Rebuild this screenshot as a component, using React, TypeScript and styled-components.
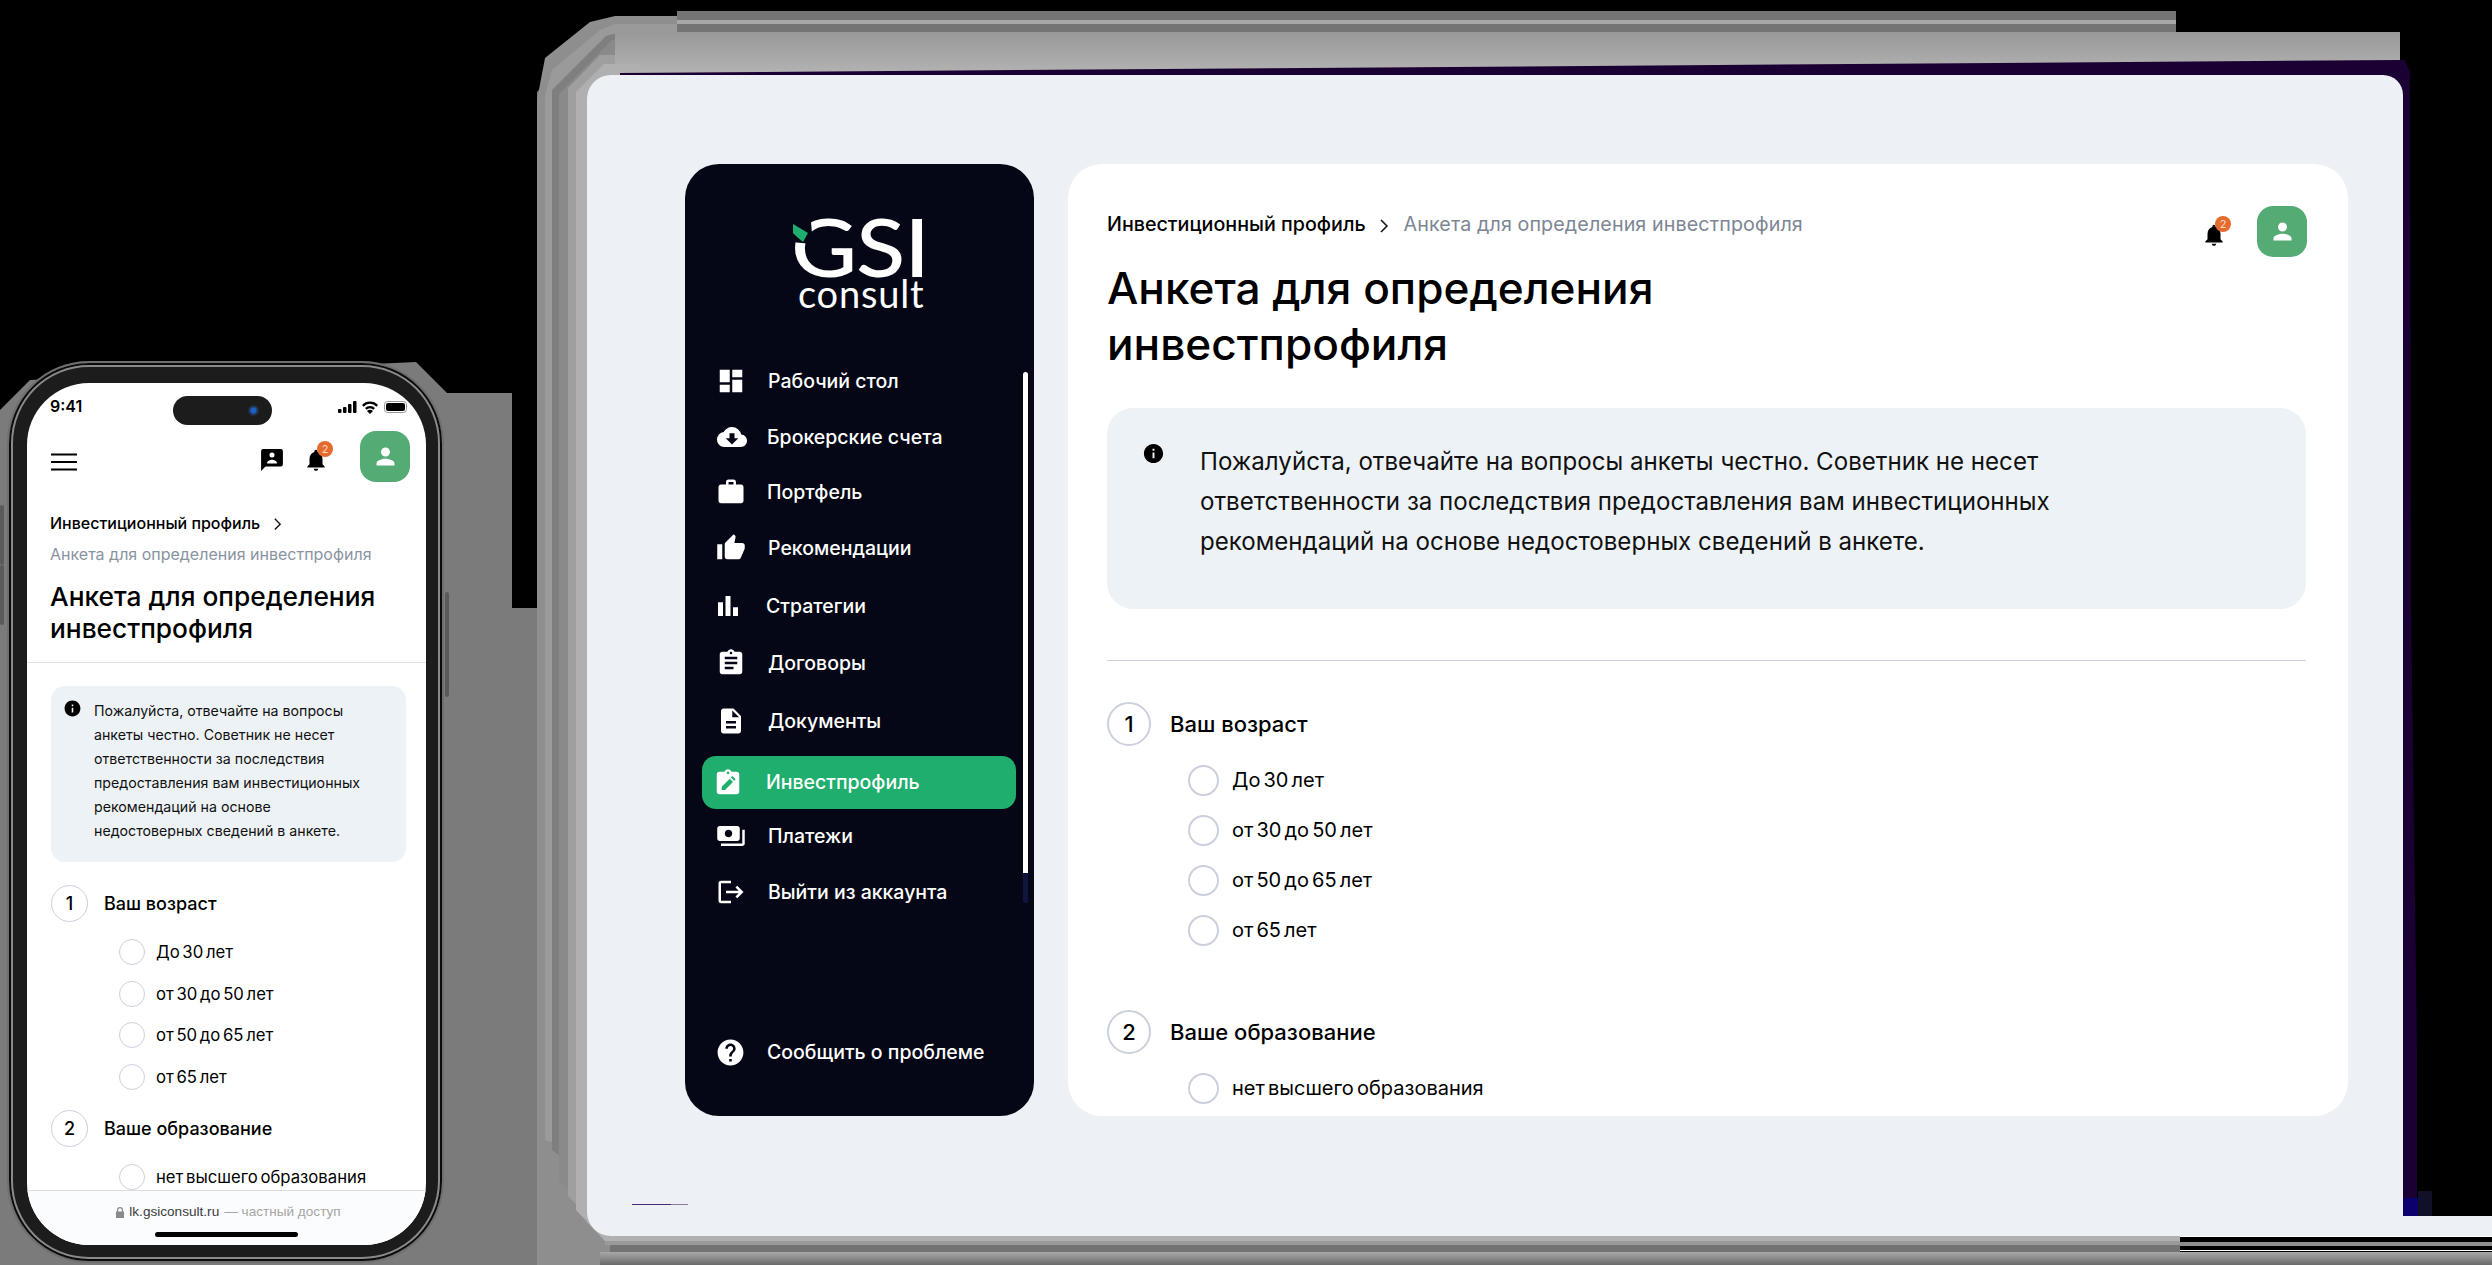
import React from "react";
import styled, { createGlobalStyle } from "styled-components";
import {
  MdDashboard, MdCloudDownload, MdWork, MdThumbUp, MdBarChart, MdAssignment, MdDescription,
  MdPayments, MdLogout, MdHelp, MdInfo, MdNotifications, MdPerson,
} from "react-icons/md";

const Global = createGlobalStyle`
  html, body { margin: 0; padding: 0; background: #000; }
  body { width: 2492px; height: 1265px; overflow: hidden; font-family: Inter, "Noto Sans", sans-serif; color: #000; }
  * { box-sizing: border-box; }
`;

const Canvas = styled.div`position: relative; width: 2492px; height: 1265px; overflow: hidden; background: #000;`;
const Decor = styled.svg`position: absolute; left: 0; top: 0;`;

/* ---------- tablet ---------- */
const TabletScreen = styled.div`
  position: absolute; left: 587px; top: 75px; width: 1816px; height: 1161px;
  background: #edf0f5; border-radius: 24px 20px 0 24px;
  display: flex; gap: 34px; padding: 89px 55px 120px 98px;
`;
const GlitchLine = styled.span`
  position: absolute; left: 45px; top: 1129px; width: 56px; height: 1px;
  background: linear-gradient(90deg, #4a2a70 0 70%, #8a7aa0 70%);
`;
const Sidebar = styled.aside`
  position: relative; width: 349px; flex: none; background: #050716; border-radius: 34px;
  display: flex; flex-direction: column; padding: 0 18px 44px 17px; color: #fff;
`;
const Logo = styled.div`position: relative; height: 197px; padding: 47px 0 0 89px; flex: none;`;
const LogoMark = styled.div`font: 500 81px/70px Lato, sans-serif; letter-spacing: -1px; color: #fff; transform: scaleX(1.12); transform-origin: left;`;
const LogoSub = styled.div`font: 400 38px/30px Lato, sans-serif; letter-spacing: 0.8px; margin: -3px 0 0 7px; color: #fff;`;
const LogoCut = styled.svg`position: absolute; left: 89px; top: 58px;`;
const Nav = styled.nav`display: flex; flex-direction: column;`;
const NavRow = styled.a<{ $gap: number; $active?: boolean }>`
  display: flex; align-items: center; margin-top: ${p => p.$gap}px;
  height: ${p => (p.$active ? 53 : 40)}px; width: 314px; padding-left: 14px;
  border-radius: 14px; background: ${p => (p.$active ? "#1fae6d" : "transparent")};
  svg { flex: none; }
`;
const NavIcon = styled.span<{ $x: number }>`display: flex; width: 32px; margin-left: ${p => p.$x}px; flex: none;`;
const NavLabel = styled.span<{ $x: number }>`
  font: 500 19.5px/24px Inter, sans-serif; letter-spacing: 0; color: #fff; margin: -1px 0 0 ${p => p.$x}px; white-space: nowrap;
`;
const Footer = styled.div`margin-top: auto;`;
const Scroll = styled.div`position: absolute; left: 338px; top: 208px; width: 5px; height: 531px; border-radius: 3px; background: linear-gradient(#fff 0 94.3%, #101540 94.3%);`;

const Card = styled.main`flex: 1; min-width: 0; background: #fff; border-radius: 34px; padding: 42px 42px 0 39px; overflow: hidden;`;
const Head = styled.header`display: flex; justify-content: space-between; align-items: flex-start;`;
const Crumbs = styled.div`display: flex; align-items: center; height: 36px; font: 500 19.7px/36px Inter, sans-serif;`;
const CrumbMuted = styled.span`color: #7d8694; font-weight: 400; letter-spacing: 0.1px;`;
const Chevron = styled.svg`margin: 3px 15px 0 13px; flex: none;`;
const Title = styled.h1`margin: 18px 0 0; font: 450 44.2px/56px Inter, sans-serif; letter-spacing: 0;`;
const Actions = styled.div`display: flex; align-items: center; margin-right: -1px;`;
const BellBox = styled.span<{ $size: number }>`position: relative; display: flex; width: ${p => p.$size}px; height: ${p => p.$size}px; margin-top: 7px;`;
const Badge = styled.span`
  position: absolute; left: 14px; top: -6px; width: 16px; height: 16px; border-radius: 50%;
  background: #e56a2e; color: #ffd9c4; font: 400 11px/16px Inter, sans-serif; text-align: center;
`;
const Avatar = styled.span<{ $ml: number }>`
  display: flex; align-items: center; justify-content: center; width: 50px; height: 51px; border-radius: 16px;
  background: #54ab74; margin-left: ${p => p.$ml}px; flex: none;
`;
const Info = styled.section`
  display: flex; margin-top: 36px; height: 201px; background: #edf2f6; border-radius: 26px; padding: 34px 40px 0 35px;
`;
const InfoIcon = styled.span`display: flex; flex: none; width: 58px; height: 30px;`;
const InfoText = styled.p`margin: 0; font: 400 24.1px/40px Inter, sans-serif; color: #111;`;
const Divider = styled.hr`margin: 51px 0 0; border: 0; border-top: 1.5px solid #cdd0dc;`;
const Question = styled.div<{ $mt: number }>`display: flex; align-items: center; gap: 19px; margin-top: ${p => p.$mt}px;`;
const Num = styled.span`
  width: 44px; height: 44px; border-radius: 50%; border: 2px solid #ccd0dc; flex: none;
  display: flex; align-items: center; justify-content: center; font: 500 22px/1 Inter, sans-serif;
`;
const QText = styled.span`font: 500 22px/30px Inter, sans-serif;`;
const Options = styled.div<{ $mt: number }>`display: flex; flex-direction: column; gap: 19px; margin: ${p => p.$mt}px 0 0 81px;`;
const Option = styled.label`display: flex; align-items: center; gap: 13px; height: 31px; font: 400 20px/26px Inter, sans-serif; word-spacing: -2.5px;`;
const OptionText = styled.span`margin-top: -2px;`;
const Radio = styled.span`width: 31px; height: 31px; border-radius: 50%; border: 2px solid #ccd0dc; flex: none;`;

/* ---------- phone ---------- */
const PhoneBody = styled.div`
  position: absolute; left: 7px; top: 361px; width: 437px; height: 902px; border-radius: 82px;
  background: #1c1c1c; border: 2px solid #6f6f6f; padding: 20px 0 0 18px;
  box-shadow: inset 0 0 0 2px #0a0a0a, inset 0 0 0 4px #8a8a8a;
`;
const PhoneButton = styled.span<{ $l: number; $t: number; $h: number }>`
  position: absolute; left: ${p => p.$l}px; top: ${p => p.$t}px; width: 4px; height: ${p => p.$h}px; background: #5a5a5a; border-radius: 2px;
`;
const PhoneScreen = styled.div`position: relative; width: 399px; height: 862px; background: #fff; border-radius: 62px; overflow: hidden;`;
const Status = styled.div`display: flex; align-items: center; justify-content: space-between; height: 48px; padding: 0 18px 0 23px;`;
const Time = styled.span`font: 600 16px/1 Inter, "Liberation Sans", sans-serif; margin-top: -3px;`;
const Island = styled.span`position: absolute; left: 146px; top: 13px; width: 99px; height: 29px; border-radius: 15px; background: #1c1c1c;`;
const Lens = styled.span`position: absolute; left: 75px; top: 9px; width: 11px; height: 11px; border-radius: 50%; background: radial-gradient(#1b63c9 0 25%, #242a36 60%);`;
const StatusIcons = styled.svg`flex: none;`;
const PhoneHead = styled.div`display: flex; align-items: center; height: 50px; padding: 0 16px 0 24px;`;
const Burger = styled.svg`margin: 12px auto 0 0;`;
const MsgIcon = styled.svg`margin-top: 8px;`;
const PhoneBell = styled(BellBox)`margin: 8px 0 0 19px;`;
const PhoneBlock = styled.div`padding: 30px 20px 17px 23px; border-bottom: 1px solid #e0e1e5;`;
const PCrumb = styled.div`display: flex; align-items: center; font: 500 16px/24px Inter, sans-serif;`;
const PCrumbMuted = styled.div`margin-top: 7px; font: 400 16px/24px Inter, sans-serif; color: #8a93a1;`;
const PTitle = styled.h1`margin: 15px 0 0; font: 450 26.3px/32px Inter, sans-serif;`;
const PBody = styled.div`padding: 23px 20px 0 24px;`;
const PInfo = styled.section`display: flex; height: 176px; background: #edf2f6; border-radius: 14px; padding: 13px 0 0 12px;`;
const PInfoIcon = styled.span`display: flex; flex: none; width: 31px; height: 20px;`;
const PInfoText = styled.p`margin: 0; font: 400 14.2px/24px Inter, sans-serif; color: #111; white-space: nowrap;`;
const PQuestion = styled.div<{ $mt: number }>`display: flex; align-items: center; gap: 16px; margin-top: ${p => p.$mt}px;`;
const PNum = styled.span`
  width: 37px; height: 37px; border-radius: 50%; border: 1px solid #ccd0dc; flex: none;
  display: flex; align-items: center; justify-content: center; font: 500 18px/1 Inter, sans-serif;
`;
const PQText = styled.span`font: 500 18px/24px Inter, sans-serif;`;
const POptions = styled.div<{ $mt: number }>`display: flex; flex-direction: column; gap: 15.7px; margin: ${p => p.$mt}px 0 0 68px;`;
const POption = styled.label`display: flex; align-items: center; gap: 11px; height: 26px; font: 400 16.7px/22px Inter, sans-serif; word-spacing: -2px; white-space: nowrap;`;
const PRadio = styled.span`width: 26px; height: 26px; border-radius: 50%; border: 1px solid #ccd0dc; flex: none;`;
const SafariBar = styled.div`
  position: absolute; left: 0; right: 0; bottom: 0; height: 55px; background: #fbfcfd; border-top: 1px solid #dcdcdc;
  display: flex; flex-direction: column; align-items: center; padding-top: 12px;
`;
const Url = styled.div`display: flex; align-items: center; gap: 5px; font: 400 13.6px/18px "Liberation Sans", sans-serif; color: #3a3a3a; margin-left: 4px;`;
const UrlMuted = styled.span`color: #a6a6a6; margin-left: 0;`;
const Home = styled.span`width: 143px; height: 5px; border-radius: 3px; background: #000; margin-top: 11px;`;

const chamfer = (x0: number, y0: number, x1: number, y1: number, c: number) =>
  `${x0 + c},${y0} ${x1},${y0} ${x1},${y1} ${x0 + c},${y1} ${x0},${y1 - c} ${x0},${y0 + c}`;

const Chev = ({ s = 1 }: { s?: number }) => (
  <Chevron width={10 * s} height={16 * s} viewBox="0 0 10 16" fill="none">
    <path d="M2 2l6 6-6 6" stroke="#111" strokeWidth="1.5" />
  </Chevron>
);

const ClipEdit = () => (
  <svg width={30} height={30} viewBox="0 0 24 24">
    <path fill="#fff" d="M19 3h-4.18C14.4 1.84 13.3 1 12 1s-2.4.84-2.82 2H5c-1.1 0-2 .9-2 2v14c0 1.1.9 2 2 2h14c1.1 0 2-.9 2-2V5c0-1.1-.9-2-2-2zm-7 0c.55 0 1 .45 1 1s-.45 1-1 1-1-.45-1-1 .45-1 1-1z" />
    <path fill="#1fae6d" d="M7 17.5v-2.6l6.4-6.4 2.6 2.6-6.4 6.4zM14.3 7.6l1.2-1.2 2.6 2.6-1.2 1.2z" />
  </svg>
);

const nav = [
  { label: "Рабочий стол", Icon: MdDashboard, gap: 0, ix: 0, tx: 20 },
  { label: "Брокерские счета", Icon: MdCloudDownload, gap: 16, ix: 1, tx: 18 },
  { label: "Портфель", Icon: MdWork, gap: 15, ix: 0, tx: 19 },
  { label: "Рекомендации", Icon: MdThumbUp, gap: 16, ix: 0, tx: 20 },
  { label: "Стратегии", Icon: MdBarChart, gap: 18, ix: -3, tx: 21 },
  { label: "Договоры", Icon: MdAssignment, gap: 17, ix: 0, tx: 20 },
  { label: "Документы", Icon: MdDescription, gap: 18, ix: 0, tx: 20 },
  { label: "Инвестпрофиль", Icon: ClipEdit, gap: 15, ix: -3, tx: 21, active: true },
  { label: "Платежи", Icon: MdPayments, gap: 7, ix: 0, tx: 20 },
  { label: "Выйти из аккаунта", Icon: MdLogout, gap: 16, ix: 0, tx: 20 },
];

const info = "Пожалуйста, отвечайте на вопросы анкеты честно. Советник не несет";

const App = () => (
  <Canvas>
    <Global />
    <Decor width={2492} height={1265} viewBox="0 0 2492 1265">
      <defs>
        <linearGradient id="top" x1="0" y1="0" x2="0" y2="1"><stop offset="0" stopColor="#989898" /><stop offset="1" stopColor="#b4b4b4" /></linearGradient>
        <linearGradient id="bot" x1="0" y1="0" x2="0" y2="1"><stop offset="0" stopColor="#a8a8a8" /><stop offset="1" stopColor="#6a6a6a" /></linearGradient>
      </defs>
      {/* backdrop behind the phone */}
      <polygon fill="#7b7b7b" points="416,362 447,393 512,393 512,608 548,608 548,1265 0,1265 0,410 30,380" />
      {/* tablet shell */}
      <polygon fill="#7a7a7a" points={chamfer(537, 22, 2176, 1265, 70)} />
      <polygon fill="#8e8e8e" points="537,1265 537,100 545,58 590,22 615,16 690,16 690,1265" />
      <rect x="677" y="11" width="1499" height="21" fill="#747474" />
      <rect x="677" y="20" width="1499" height="4" fill="#a8a8a8" />
      <polygon fill="#9a9a9a" points="545,1140 545,95 552,70 600,30 615,24 677,24 677,1180" />
      <polygon fill="#7f7f7f" points="552,1150 552,90 606,36 620,32 620,1200" />
      <polygon fill="#8a8a8a" points="559,1180 559,94 612,40 640,40 640,1240 612,1240" />
      <polygon fill="#9f9f9f" points="568,1196 568,88 600,55 640,55 640,1250 620,1250" />
      <rect x="615" y="32" width="1785" height="43" fill="url(#top)" />
      <polygon fill="#b0b0b0" points="576,1210 576,92 604,64 640,64 640,1246 610,1246" />
      <polygon fill="#1b0033" points="620,75 620,73 2400,60 2405,60 2410,72 2411,600 2417,1050 2417,1216 2380,1216 2380,75" />
      <rect x="2403" y="1198" width="15" height="18" fill="#0a0070" />
      <rect x="2418" y="1191" width="14" height="25" fill="#101028" />
      <rect x="2397" y="1203" width="6" height="13" fill="#dede00" />
      {/* bottom bands */}
      <polygon fill="#b0b0b0" points="587,1216 607,1236 2180,1236 2180,1241 605,1241 587,1222" />
      <rect x="605" y="1241" width="1575" height="4" fill="#9a9a9a" />
      <rect x="610" y="1245" width="1570" height="20" fill="#737373" />
      <rect x="2180" y="1236" width="312" height="16" fill="#000" />
      <rect x="2180" y="1236" width="312" height="1" fill="#fff" />
      <rect x="2180" y="1242" width="312" height="4" fill="#8f8f8f" />
      <rect x="2180" y="1250" width="312" height="1" fill="#fff" />
      <rect x="600" y="1252" width="1892" height="13" fill="url(#bot)" />
      <rect x="2403" y="1216" width="89" height="20" fill="#edf0f5" />
    </Decor>

    <TabletScreen>
      <Sidebar>
        <Logo>
          <LogoMark>GSI</LogoMark>
          <LogoSub>consult</LogoSub>
          <LogoCut width={24} height={24} viewBox="0 0 24 24">
            <polygon points="0,0 20,0 22,22 0,20" fill="#050716" />
            <polygon points="2,2 17,11 12,20 6,15 2,11" fill="#1fae6d" />
          </LogoCut>
        </Logo>
        <Nav>
          {nav.map(({ label, Icon, gap, ix, tx, active }) => (
            <NavRow key={label} $gap={gap} $active={active}>
              <NavIcon $x={ix}><Icon size={30} color="#fff" /></NavIcon>
              <NavLabel $x={tx}>{label}</NavLabel>
            </NavRow>
          ))}
        </Nav>
        <Footer>
          <NavRow $gap={0}>
            <NavIcon $x={-1}><MdHelp size={31} color="#fff" /></NavIcon>
            <NavLabel $x={20}>Сообщить о проблеме</NavLabel>
          </NavRow>
        </Footer>
        <Scroll />
      </Sidebar>
      <Card>
        <Head>
          <div>
            <Crumbs>
              <span>Инвестиционный профиль</span>
              <Chev />
              <CrumbMuted>Анкета для определения инвестпрофиля</CrumbMuted>
            </Crumbs>
            <Title>Анкета для определения<br />инвестпрофиля</Title>
          </div>
          <Actions>
            <BellBox $size={26}>
              <MdNotifications size={26} />
              <Badge>2</Badge>
            </BellBox>
            <Avatar $ml={30}><MdPerson size={27} color="#fff" /></Avatar>
          </Actions>
        </Head>
        <Info>
          <InfoIcon><MdInfo size={23} /></InfoIcon>
          <InfoText>
            {info}<br />
            ответственности за последствия предоставления вам инвестиционных<br />
            рекомендаций на основе недостоверных сведений в анкете.
          </InfoText>
        </Info>
        <Divider />
        <Question $mt={41}><Num>1</Num><QText>Ваш возраст</QText></Question>
        <Options $mt={19}>
          {["До 30 лет", "от 30 до 50 лет", "от 50 до 65 лет", "от 65 лет"].map(t => (
            <Option key={t}><Radio /><OptionText>{t}</OptionText></Option>
          ))}
        </Options>
        <Question $mt={64}><Num>2</Num><QText>Ваше образование</QText></Question>
        <Options $mt={19}>
          <Option><Radio /><OptionText>нет высшего образования</OptionText></Option>
        </Options>
      </Card>
      <GlitchLine />
    </TabletScreen>

    <PhoneButton $l={0} $t={505} $h={60} />
    <PhoneButton $l={0} $t={565} $h={60} />
    <PhoneButton $l={445} $t={592} $h={105} />
    <PhoneBody>
      <PhoneScreen>
        <Status>
          <Time>9:41</Time>
          <StatusIcons width={70} height={16} viewBox="0 0 70 16">
            <rect x="0" y="10" width="3.5" height="4" rx="1" />
            <rect x="5" y="8" width="3.5" height="6" rx="1" />
            <rect x="10" y="5" width="3.5" height="9" rx="1" />
            <rect x="15" y="2" width="3.5" height="12" rx="1" />
            <path d="M24 6a11 11 0 0 1 16 0l-1.6 1.7a8.6 8.6 0 0 0-12.8 0zM27 9a7 7 0 0 1 10 0l-1.6 1.7a4.6 4.6 0 0 0-6.8 0zM32 15l-3-3a4.2 4.2 0 0 1 6 0z" />
            <rect x="46.5" y="2.5" width="22" height="11" rx="3" fill="none" stroke="#999" />
            <rect x="48" y="4" width="19" height="8" rx="2" />
          </StatusIcons>
        </Status>
        <Island><Lens /></Island>
        <PhoneHead>
          <Burger width={26} height={18} viewBox="0 0 26 18">
            <path d="M0 1.5h26M0 9h26M0 16.500h26" stroke="#000" strokeWidth="2" />
          </Burger>
          <MsgIcon width={24} height={24} viewBox="1 1 22 22">
            <path d="M20 2H4a2 2 0 0 0-2 2v18l4-4h14a2 2 0 0 0 2-2V4a2 2 0 0 0-2-2z" />
            <circle cx="12" cy="7.500" r="2.300" fill="#fff" />
            <path fill="#fff" d="M7.500 14.500c0-1.800 3-2.700 4.500-2.700s4.500.9 4.500 2.700v.7h-9z" />
          </MsgIcon>
          <PhoneBell $size={26}>
            <MdNotifications size={26} />
            <Badge>2</Badge>
          </PhoneBell>
          <Avatar $ml={31}><MdPerson size={27} color="#fff" /></Avatar>
        </PhoneHead>
        <PhoneBlock>
          <PCrumb>Инвестиционный профиль<Chev s={0.9} /></PCrumb>
          <PCrumbMuted>Анкета для определения инвестпрофиля</PCrumbMuted>
          <PTitle>Анкета для определения<br />инвестпрофиля</PTitle>
        </PhoneBlock>
        <PBody>
          <PInfo>
            <PInfoIcon><MdInfo size={19} /></PInfoIcon>
            <PInfoText>
              Пожалуйста, отвечайте на вопросы<br />
              анкеты честно. Советник не несет<br />
              ответственности за последствия<br />
              предоставления вам инвестиционных<br />
              рекомендаций на основе<br />
              недостоверных сведений в анкете.
            </PInfoText>
          </PInfo>
          <PQuestion $mt={23}><PNum>1</PNum><PQText>Ваш возраст</PQText></PQuestion>
          <POptions $mt={17}>
            {["До 30 лет", "от 30 до 50 лет", "от 50 до 65 лет", "от 65 лет"].map(t => (
              <POption key={t}><PRadio />{t}</POption>
            ))}
          </POptions>
          <PQuestion $mt={20}><PNum>2</PNum><PQText>Ваше образование</PQText></PQuestion>
          <POptions $mt={17}>
            <POption><PRadio />нет высшего образования</POption>
          </POptions>
        </PBody>
        <SafariBar>
          <Url>
            <svg width={8} height={11} viewBox="0 0 8 11">
              <path fill="#8a8a8a" d="M1 4.500V3a3 3 0 0 1 6 0v1.500h1V11H0V4.500zm1.200 0h3.600V3a1.800 1.800 0 0 0-3.600 0z" />
            </svg>
            <span>lk.gsiconsult.ru</span>
            <UrlMuted>— частный доступ</UrlMuted>
          </Url>
          <Home />
        </SafariBar>
      </PhoneScreen>
    </PhoneBody>
  </Canvas>
);

export default App;
